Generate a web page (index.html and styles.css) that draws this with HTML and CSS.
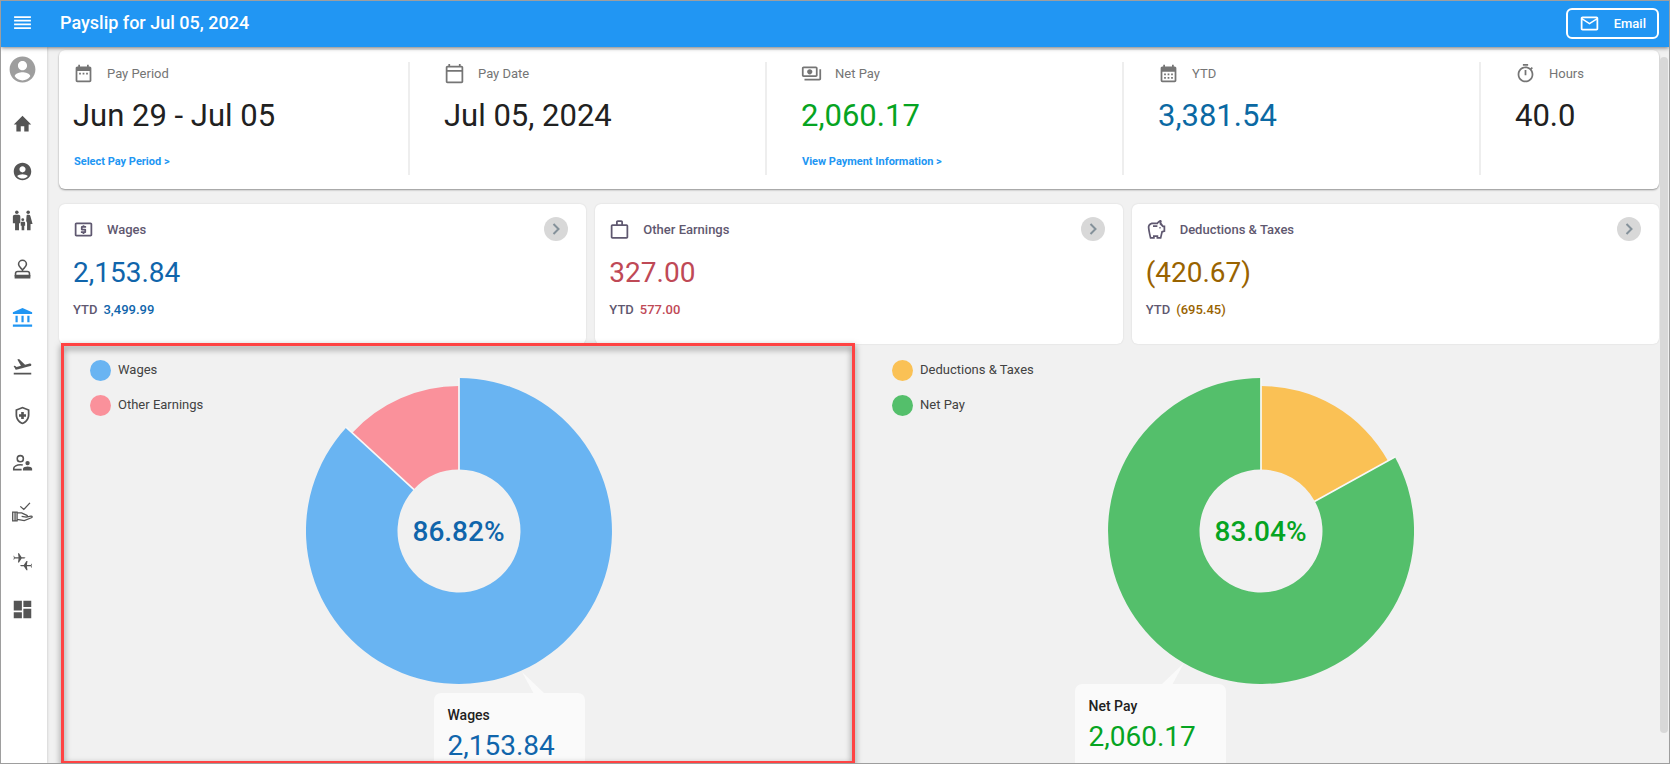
FILE: index.html
```html
<!DOCTYPE html>
<html lang="en">
<head>
<meta charset="utf-8">
<title>Payslip for Jul 05, 2024</title>
<link rel="stylesheet" href="styles.css">
</head>
<body>
<div class="app">
  <header class="topbar">
    <button class="menu-btn" aria-label="Menu">
      <svg class="icon" viewBox="0 0 20 20"><path d="M2 3h16v1.700H2zM2 6.500h16v1.700H2zM2 10h16v1.700H2zM2 13.500h16v1.700H2z"/></svg>
    </button>
    <h1 class="title">Payslip for Jul 05, 2024</h1>
    <button class="email-btn">
      <svg class="icon" viewBox="0 0 24 24"><path d="M22 6c0-1.100-.9-2-2-2H4c-1.100 0-2 .9-2 2v12c0 1.100.9 2 2 2h16c1.100 0 2-.9 2-2V6zm-2 0l-8 5-8-5h16zm0 12H4V8l8 5 8-5v10z"/></svg>
      <span>Email</span>
    </button>
  </header>

  <div class="body">
    <nav class="sidebar">
      <a class="avatar" href="#" aria-label="Profile"><svg viewBox="0 0 24 24"><path d="M12 2C6.480 2 2 6.480 2 12s4.480 10 10 10 10-4.480 10-10S17.520 2 12 2zm0 3.500c1.900 0 3.500 1.600 3.500 3.500s-1.600 3.500-3.500 3.500S8.500 10.900 8.500 9s1.600-3.500 3.500-3.500zm0 15c-2.500 0-4.710-1.280-6-3.220.03-1.990 4-3.080 6-3.080s5.970 1.090 6 3.080c-1.290 1.940-3.500 3.220-6 3.220z"/></svg></a>
      <a class="nav-item" href="#" aria-label="Home"><svg class="icon" viewBox="0 0 24 24"><path d="M10 21v-6h4v6h5v-8h3L12 3 2 13h3v8z"/></svg></a>
      <a class="nav-item" href="#" aria-label="Account"><svg class="icon" viewBox="0 0 24 24"><path d="M12 2C6.480 2 2 6.480 2 12s4.480 10 10 10 10-4.480 10-10S17.520 2 12 2zm0 4c1.930 0 3.500 1.570 3.500 3.500S13.930 13 12 13s-3.500-1.570-3.500-3.500S10.070 6 12 6zm0 14c-2.030 0-4.430-.82-6.140-2.880C7.550 15.800 9.680 15 12 15s4.450.8 6.140 2.120C16.430 19.180 14.030 20 12 20z"/></svg></a>
      <a class="nav-item" href="#" aria-label="Family"><svg class="icon" viewBox="0 0 24 24"><circle cx="5.500" cy="2.700" r="2"/><circle cx="18.500" cy="2.700" r="2"/><circle cx="12.300" cy="11" r="1.600"/><path d="M3.500 5.500h4c1.200 0 2 .8 2 2V15H8v8H3.500v-8H1V7.500c0-1.200.8-2 2.500-2zM17.800 5.500h1.400c.9 0 1.500.5 1.800 1.300L23.500 16h-2.300v7h-4v-8.500l-1-2 .4-5.500c.1-.9.4-1.500 1.200-1.500zM11.500 13.500h2c.9 0 1.500.6 1.500 1.400V18h-1v5h-3v-5h-1v-3.100c0-.8.6-1.400 1.500-1.400z"/></svg></a>
      <a class="nav-item" href="#" aria-label="Approvals"><svg class="icon" viewBox="0 0 24 24"><path fill="none" stroke="currentColor" stroke-width="1.800" d="M12 14v-1.500C10.500 10.500 7.500 8.800 7.500 6 7.500 3.500 9.500 1.500 12 1.500S16.500 3.500 16.500 6c0 2.800-3 4.500-4.500 6.500M4 19v-2.200c0-1.500.8-2.500 2.500-2.500h11c1.700 0 2.500 1 2.500 2.500V19z"/><path d="M3 18.300h18v4H3z"/></svg></a>
      <a class="nav-item active" href="#" aria-label="Pay"><svg class="icon" viewBox="0 0 24 24"><path d="M12 1 23 6v2H1V6zM4 10h2.500v7.500H4zM10.800 10h2.500v7.500h-2.500zM17.500 10H20v7.500h-2.500zM1 20h22V22.500H1z"/></svg></a>
      <a class="nav-item" href="#" aria-label="Time off"><svg class="icon" viewBox="0 0 24 24"><path d="M2 19h20v2H2zM22.070 9.640c-.21-.8-1.040-1.280-1.840-1.060L14.920 10l-6.900-6.430-1.930.51 4.140 7.170-4.970 1.330-1.970-1.540-1.450.39 2.590 4.490s7.120-1.900 16.570-4.430c.81-.23 1.280-1.050 1.070-1.850z"/></svg></a>
      <a class="nav-item" href="#" aria-label="Benefits"><svg class="icon" viewBox="0 0 24 24"><path d="M10.500 13.500H8v-3h2.500V8h3v2.500H16v3h-2.500V16h-3v-2.500zM12 2L4 5v6.090c0 5.050 3.410 9.760 8 10.910 4.590-1.150 8-5.860 8-10.910V5l-8-3zm6 9.090c0 4-2.550 7.700-6 8.830-3.450-1.130-6-4.820-6-8.830v-4.700l6-2.250 6 2.250v4.700z"/></svg></a>
      <a class="nav-item" href="#" aria-label="People"><svg class="icon" viewBox="0 0 24 24"><g fill="none" stroke="currentColor" stroke-width="1.800"><circle cx="9.500" cy="6.500" r="3.500"/><path d="M11 19H2v-1.500c0-2 3.500-4 7.500-4 1 0 2 .1 2.800.3"/></g><circle cx="17.800" cy="11.500" r="2.500"/><path d="M12.500 20v-2c0-1.800 3.200-2.700 5.300-2.700s5.200.9 5.200 2.700v2z"/></svg></a>
      <a class="nav-item" href="#" aria-label="Requests"><svg class="icon" viewBox="0 0 24 24"><path fill="none" stroke="currentColor" stroke-width="1.500" d="M9.500 5l4 3.500L20.500 1M.8 11.500h5v10h-5zM3.500 11.500v10M6 12.500h5l6 2.800c1 .6.600 2-.7 1.900L11 16.500M17.500 17l4.200-.8c1.500-.2 1.800 1.300.5 1.800L14 21.300l-8-1.500"/></svg></a>
      <a class="nav-item" href="#" aria-label="Transfers"><svg class="icon" viewBox="0 0 24 24"><path d="M3 7h4.500L6.800 2.500h1.200L11 7h3l1.500.8L14 8.500h-3L8 13H6.800l.7-4.500H3L2.300 10H1.700L2.200 7.800 1.700 5.500h.6zM21.500 16H17l.7-4.500h-1.200L13.500 16h-3l-1.500.8 1.500.7h3l3 4.500h1.200L17 17.500h4.500l.7 1.500h.6l-.5-2.200.5-2.300h-.6z"/></svg></a>
      <a class="nav-item" href="#" aria-label="Dashboard"><svg class="icon" viewBox="0 0 24 24"><path d="M2 13h9.300V2H2v11zm0 9h9.300v-7H2v7zm11 0h9V11h-9v11zm0-20v7h9V2h-9z"/></svg></a>
    </nav>

    <main class="main">
      <section class="summary">
        <div class="stat">
          <div class="stat-head"><svg class="icon" viewBox="0 0 24 24"><path d="M9 11H7v2h2v-2zm4 0h-2v2h2v-2zm4 0h-2v2h2v-2zm2-7h-1V2h-2v2H8V2H6v2H5c-1.110 0-1.990.9-1.990 2L3 20c0 1.100.89 2 2 2h14c1.100 0 2-.9 2-2V6c0-1.100-.9-2-2-2zm0 16H5V9h14v11z"/></svg><span>Pay Period</span></div>
          <div class="stat-value">Jun 29 - Jul 05</div>
          <a class="stat-link" href="#">Select Pay Period &gt;</a>
        </div>
        <div class="stat">
          <div class="stat-head"><svg class="icon" viewBox="0 0 24 24"><path d="M20 3h-1V1h-2v2H7V1H5v2H4c-1.100 0-2 .9-2 2v16c0 1.100.9 2 2 2h16c1.100 0 2-.9 2-2V5c0-1.100-.9-2-2-2zm0 18H4V10h16v11zm0-13H4V5h16v3z"/></svg><span>Pay Date</span></div>
          <div class="stat-value">Jul 05, 2024</div>
        </div>
        <div class="stat">
          <div class="stat-head"><svg class="icon" viewBox="0 0 24 24"><path d="M19 14V6c0-1.100-.9-2-2-2H3c-1.100 0-2 .9-2 2v8c0 1.100.9 2 2 2h14c1.100 0 2-.9 2-2zm-2 0H3V6h14v8zm-7-7c-1.660 0-3 1.340-3 3s1.340 3 3 3 3-1.340 3-3-1.340-3-3-3zm13 0v11c0 1.100-.9 2-2 2H4v-2h17V7h2z"/></svg><span>Net Pay</span></div>
          <div class="stat-value green">2,060.17</div>
          <a class="stat-link" href="#">View Payment Information &gt;</a>
        </div>
        <div class="stat">
          <div class="stat-head"><svg class="icon" viewBox="0 0 24 24"><path d="M19 4h-1V2h-2v2H8V2H6v2H5c-1.110 0-1.990.9-1.990 2L3 20a2 2 0 0 0 2 2h14c1.100 0 2-.9 2-2V6c0-1.100-.9-2-2-2zm0 16H5V10h14v10zM9 14H7v-2h2v2zm4 0h-2v-2h2v2zm4 0h-2v-2h2v2zm-8 4H7v-2h2v2zm4 0h-2v-2h2v2zm4 0h-2v-2h2v2z"/></svg><span>YTD</span></div>
          <div class="stat-value teal">3,381.54</div>
        </div>
        <div class="stat">
          <div class="stat-head"><svg class="icon" viewBox="0 0 24 24"><path d="M15 1H9v2h6V1zm-4 13h2V8h-2v6zm8.030-6.610l1.420-1.420c-.43-.51-.9-.99-1.410-1.410l-1.420 1.420C16.070 4.740 14.120 4 12 4c-4.970 0-9 4.030-9 9s4.020 9 9 9 9-4.030 9-9c0-2.120-.74-4.070-1.970-5.610zM12 20c-3.870 0-7-3.130-7-7s3.130-7 7-7 7 3.130 7 7-3.130 7-7 7z"/></svg><span>Hours</span></div>
          <div class="stat-value">40.0</div>
        </div>
      </section>

      <section class="cards">
        <article class="card">
          <div class="card-head"><svg class="icon" viewBox="0 0 24 24"><path d="M11 17h2v-1h1c.55 0 1-.45 1-1v-3c0-.55-.45-1-1-1h-3v-1h4V8h-2V7h-2v1h-1c-.55 0-1 .45-1 1v3c0 .55.45 1 1 1h3v1H9v2h2v1zm9-13H4c-1.110 0-1.990.89-1.990 2L2 18c0 1.110.89 2 2 2h16c1.110 0 2-.89 2-2V6c0-1.110-.89-2-2-2zm0 14H4V6h16v12z"/></svg><h2>Wages</h2>
            <button class="go" aria-label="Open wages"><svg viewBox="0 0 24 24"><path d="M9.500 7l5 5-5 5"/></svg></button></div>
          <div class="card-value blue">2,153.84</div>
          <div class="card-ytd">YTD <b class="blue">3,499.99</b></div>
        </article>
        <article class="card">
          <div class="card-head"><svg class="icon" viewBox="0 0 24 24"><path d="M14 6V3.500h-4V6h4zM4 8v12.500h16V8H4zm16-2c1.110 0 2 .89 2 2v12.500c0 1.110-.89 2-2 2H4c-1.110 0-2-.89-2-2V8c0-1.110.89-2 2-2h4V3.500c0-1.110.89-2 2-2h4c1.110 0 2 .89 2 2V6h4z"/></svg><h2>Other Earnings</h2>
            <button class="go" aria-label="Open other earnings"><svg viewBox="0 0 24 24"><path d="M9.500 7l5 5-5 5"/></svg></button></div>
          <div class="card-value red">327.00</div>
          <div class="card-ytd">YTD <b class="red">577.00</b></div>
        </article>
        <article class="card">
          <div class="card-head"><svg class="icon" viewBox="0 0 24 24"><path d="M15 10c0-.55.45-1 1-1s1 .45 1 1-.45 1-1 1-1-.45-1-1zM8 9h5V7H8v2zm14-1.500v6.970l-2.820.94L17.500 22.500H12v-2h-2v2H4.500S2 12.540 2 9.500C2 6.460 4.460 4 7.500 4h5c.91-1.210 2.360-3 4-3 .83 0 1.500.67 1.500 1.500 0 .21-.04.4-.12.58-.14.34-.26.73-.32 1.150l2.270 3.270H22zM20 9.500h-1L15.500 6c0-.65.09-1.290.26-1.910-.97.25-1.760.97-2.090 1.910H7.500C5.570 6 4 7.570 4 9.500c0 1.880 1.220 8.150 2.010 11H8v-2h6v2h2.010l1.550-6.650 2.440-.82V9.500z"/></svg><h2>Deductions &amp; Taxes</h2>
            <button class="go" aria-label="Open deductions and taxes"><svg viewBox="0 0 24 24"><path d="M9.500 7l5 5-5 5"/></svg></button></div>
          <div class="card-value brown">(420.67)</div>
          <div class="card-ytd">YTD <b class="brown">(695.45)</b></div>
        </article>
      </section>

      <section class="charts">
        <div class="chart">
          <ul class="legend">
            <li><span class="dot dot-blue"></span>Wages</li>
            <li><span class="dot dot-pink"></span>Other Earnings</li>
          </ul>
          <div class="donut">
            <svg viewBox="-153 -153 306 306">
              <path fill="#69b4f2" d="M0-153A153 153 0 1 1-112.700-103.500L-45.300-41.600A61.500 61.500 0 1 0 0-61.500z"/>
              <path fill="#fa919b" d="M-106.800-98.100A145 145 0 0 1 0-145V-61.500A61.500 61.500 0 0 0-45.300-41.600z"/>
              <path stroke="#f8f8f8" stroke-width="1.700" d="M0-153V-61M-113-103.800-45-41.300"/>
            </svg>
            <span class="percent blue">86.82%</span>
            <div class="callout callout-wages">
              <svg class="pointer" viewBox="0 0 24 22"><path d="M0 0 12 22H23z"/></svg>
              <h3>Wages</h3>
              <div class="card-value blue">2,153.84</div>
            </div>
          </div>
          <div class="highlight"></div>
        </div>
        <div class="chart">
          <ul class="legend">
            <li><span class="dot dot-amber"></span>Deductions &amp; Taxes</li>
            <li><span class="dot dot-green"></span>Net Pay</li>
          </ul>
          <div class="donut">
            <svg viewBox="-153 -153 306 306">
              <path fill="#54bf6b" d="M133.900-74.100A153 153 0 1 1 0-153V-61.500A61.500 61.500 0 1 0 53.800-29.800z"/>
              <path fill="#fac155" d="M0-145A145 145 0 0 1 126.900-70.200L53.800-29.800A61.500 61.500 0 0 0 0-61.500z"/>
              <path stroke="#f8f8f8" stroke-width="1.700" d="M0-153V-61M134.300-74.300 53.400-29.500"/>
            </svg>
            <span class="percent green">83.04%</span>
            <div class="callout callout-net">
              <svg class="pointer" viewBox="0 0 24 22"><path d="M23 0 0 22H11z"/></svg>
              <h3>Net Pay</h3>
              <div class="card-value green">2,060.17</div>
            </div>
          </div>
        </div>
      </section>
      <div class="scrollbar"></div>
    </main>
  </div>
</div>
</body>
</html>
```
FILE: styles.css
```css
* {
  box-sizing: border-box;
}

body {
  margin: 0;
  font-family: Roboto, "Liberation Sans", sans-serif;
  color: #212121;
}

h1, h2, h3, ul {
  margin: 0;
  padding: 0;
}

button {
  border: 0;
  padding: 0;
  background: none;
  font: inherit;
  color: inherit;
}

a {
  color: inherit;
  text-decoration: none;
}

svg {
  display: block;
  fill: currentColor;
}

.app {
  display: flex;
  flex-direction: column;
  height: 100vh;
  overflow: hidden;
  border: 1px solid #9e9e9e;
  background: #f1f1f1;
}

.icon {
  width: 21px;
  height: 21px;
  flex: none;
}

.topbar {
  position: relative;
  z-index: 2;
  display: flex;
  align-items: center;
  flex: none;
  height: 46px;
  padding: 0 10px 2px 0;
  background: #2196f3;
  color: #fff;
  box-shadow: 0 1px 4px rgba(0, 0, 0, 0.5);
}

.menu-btn {
  display: flex;
  justify-content: center;
  width: 43px;
  margin-right: 16px;
}

.title {
  font-size: 18px;
  font-weight: 500;
  line-height: 24px;
}

.email-btn {
  display: flex;
  align-items: center;
  gap: 14px;
  height: 31px;
  margin-left: auto;
  padding: 0 11px;
  border: 2px solid #fff;
  border-radius: 6px;
  font-size: 13px;
  font-weight: 500;
}

.body {
  display: flex;
  flex: 1;
  min-height: 0;
}

.sidebar {
  display: flex;
  flex-direction: column;
  flex: none;
  width: 46px;
  padding: 7px 3px 129px 0;
  background: #fff;
  color: #555;
  box-shadow: 0 0 3px rgba(0, 0, 0, 0.2);
}

.avatar {
  flex: none;
  width: 31px;
  margin: 0 auto 14px;
  color: #9e9e9e;
}

.nav-item {
  display: flex;
  flex: 1;
  align-items: center;
  justify-content: center;
  min-height: 40px;
}

.active {
  color: #2196f3;
}

.main {
  position: relative;
  flex: 1;
  min-width: 0;
  padding-top: 3px;
}

.summary {
  display: grid;
  grid-template-columns: 351fr 357fr 357fr 357fr 178fr;
  margin: 0 10px 0 12px;
  padding: 12px 0 14px;
  border-radius: 6px;
  background: #fff;
  box-shadow: 0 1px 2px rgba(0, 0, 0, 0.4);
}

.stat {
  height: 113px;
  padding-left: 34px;
  border-right: 2px solid #eee;
}

.stat:first-child {
  padding-left: 14px;
}

.stat:last-child {
  border-right: 0;
}

.stat-head {
  display: flex;
  align-items: center;
  gap: 13px;
  height: 22px;
  font-size: 13px;
  color: #757575;
}

.stat-value {
  margin: 12px 0 18px;
  font-size: 31px;
  line-height: 40px;
}

.stat-link {
  display: block;
  padding-left: 1px;
  font-size: 11px;
  line-height: 16px;
  font-weight: 700;
  color: #2196f3;
}

.cards {
  display: grid;
  grid-template-columns: repeat(3, 1fr);
  gap: 9px;
  margin: 15px 10px 0 12px;
}

.card {
  height: 140px;
  padding: 13px 18px 0 14px;
  border-radius: 6px;
  background: #fff;
  box-shadow: 0 0 2px rgba(0, 0, 0, 0.12);
}

.card-head {
  display: flex;
  align-items: center;
  gap: 13px;
  height: 24px;
  color: #5f5870;
}

.card-head h2 {
  font-size: 13px;
  font-weight: 500;
}

.go {
  width: 24px;
  height: 24px;
  margin-left: auto;
  border-radius: 50%;
  background: #d8d8d8;
  color: #84919a;
}

.go path {
  fill: none;
  stroke: currentColor;
  stroke-width: 2;
}

.card-value {
  font-size: 28px;
  line-height: 32px;
}

.card .card-value {
  margin: 16px 0 13px;
}

.card-ytd {
  display: flex;
  gap: 6px;
  font-size: 13px;
  line-height: 16px;
  font-weight: 500;
  color: #5f5870;
}

.card-ytd b {
  font-weight: 500;
}

.blue {
  color: #1065ab;
}

.teal {
  color: #0b69a3;
}

.red {
  color: #bf4956;
}

.brown {
  color: #996300;
}

.green {
  color: #06a422;
}

.charts {
  display: grid;
  grid-template-columns: repeat(2, 1fr);
  margin: 15px 8px 0 10px;
}

.chart {
  position: relative;
  height: 440px;
  padding-top: 19px;
  border-left: 1px solid #e6e6e6;
}

.chart:first-child {
  border-left-color: transparent;
}

.legend {
  position: absolute;
  top: 0;
  left: 32px;
  display: grid;
  gap: 13px;
  list-style: none;
  font-size: 13px;
  line-height: 22px;
  color: #424242;
}

.legend li {
  display: flex;
  align-items: center;
  gap: 7px;
}

.dot {
  width: 21px;
  height: 21px;
  border-radius: 50%;
}

.dot-blue {
  background: #69b4f2;
}

.dot-pink {
  background: #fa919b;
}

.dot-amber {
  background: #fac155;
}

.dot-green {
  background: #54bf6b;
}

.donut {
  position: relative;
  display: grid;
  place-items: center;
  width: 306px;
  height: 306px;
  margin: 0 auto;
}

.donut > svg,
.donut > .percent {
  grid-area: 1 / 1;
}

.percent {
  font-size: 28px;
  font-weight: 500;
}

.callout {
  position: absolute;
  width: 151px;
  height: 110px;
  padding: 13px 14px;
  border-radius: 7px;
  background: #fafafa;
}

.callout h3 {
  font-size: 14px;
  font-weight: 500;
  line-height: 18px;
}

.callout .card-value {
  margin-top: 6px;
}

.callout-wages {
  top: 315px;
  left: 128px;
}

.callout-net {
  top: 306px;
  left: -33px;
}

.pointer {
  position: absolute;
  top: -21px;
  width: 24px;
  height: 22px;
  fill: #fafafa;
}

.callout-wages .pointer {
  left: 88px;
}

.callout-net .pointer {
  left: 86px;
}

/* Frame around the earnings chart */
.highlight {
  position: absolute;
  top: -16px;
  left: 3px;
  right: 4px;
  height: 421px;
  border: 3px solid #ff4343;
  filter: drop-shadow(0 3px 3px rgba(0, 0, 0, 0.5));
}

.scrollbar {
  position: absolute;
  top: 10px;
  right: 1px;
  width: 8px;
  height: 676px;
  border-radius: 4px;
  background: #d8d8d8;
}
```
